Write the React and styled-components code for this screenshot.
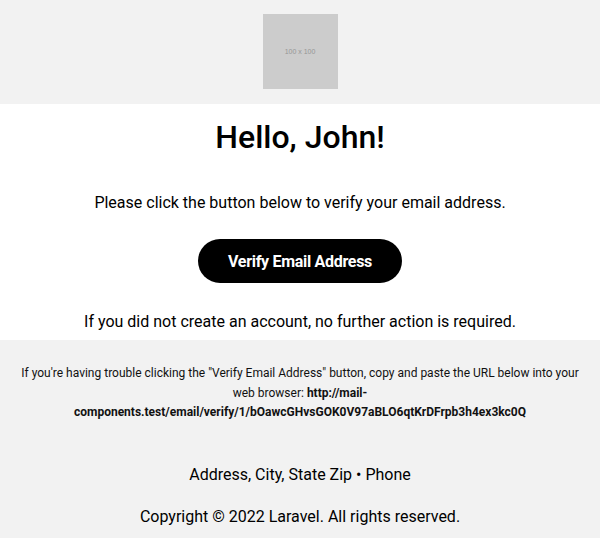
import styled, { createGlobalStyle } from "styled-components";

const GlobalStyle = createGlobalStyle`
  html, body {
    margin: 0;
    padding: 0;
    background: #ffffff;
  }
  body {
    font-family: Roboto, "Liberation Sans", sans-serif;
    color: #000000;
  }
`;

const Page = styled.div`
  width: 600px;
  display: flex;
  flex-direction: column;
`;

const Header = styled.div`
  background: #f2f2f2;
  height: 104px;
  display: flex;
  justify-content: center;
  padding-top: 14px;
  box-sizing: border-box;
`;

const Placeholder = styled.div`
  width: 75px;
  height: 75px;
  background: #cccccc;
  color: #969696;
  font-family: "Liberation Sans", Arial, sans-serif;
  font-size: 7px;
  display: flex;
  align-items: center;
  justify-content: center;
`;

const Body = styled.div`
  background: #ffffff;
  display: flex;
  flex-direction: column;
  align-items: center;
  padding: 11px 0 6px;
`;

const Heading = styled.h1`
  margin: 0;
  font-size: 32px;
  font-weight: 500;
  line-height: 44px;
`;

const Text = styled.p`
  margin: ${(p) => p.$margin || "0"};
  font-size: 16px;
  line-height: 24px;
  text-align: center;
`;

const Button = styled.a`
  display: flex;
  align-items: center;
  justify-content: center;
  width: 204px;
  height: 44px;
  border-radius: 22px;
  background: #000000;
  color: #ffffff;
  font-weight: 700;
  font-size: 16px;
  text-decoration: none;
  letter-spacing: -0.3px;
  margin: 24px 0 27px;
`;

const Footer = styled.div`
  background: #f2f2f2;
  padding: 24px 20px 10px;
  display: flex;
  flex-direction: column;
  align-items: center;
  flex: 1;
  min-height: 199px;
  box-sizing: border-box;
`;

const Trouble = styled.p`
  margin: 0;
  font-size: 12px;
  line-height: 19.5px;
  text-align: center;
  color: #111111;
  strong {
    font-weight: 700;
  }
`;

export default function App() {
  return (
    <Page>
      <GlobalStyle />
      <Header>
        <Placeholder>100 x 100</Placeholder>
      </Header>
      <Body>
        <Heading>Hello, John!</Heading>
        <Text $margin="32px 0 0">
          Please click the button below to verify your email address.
        </Text>
        <Button href="#">Verify Email Address</Button>
        <Text>If you did not create an account, no further action is required.</Text>
      </Body>
      <Footer>
        <Trouble>
          If you're having trouble clicking the "Verify Email Address" button, copy and paste the URL below into your
          web browser:{" "}
          <strong>
            http://mail-components.test/email/verify/1/bOawcGHvsGOK0V97aBLO6qtKrDFrpb3h4ex3kc0Q
          </strong>
        </Trouble>
        <Text $margin="40px 0 0">Address, City, State Zip • Phone</Text>
        <Text $margin="18px 0 0">Copyright © 2022 Laravel. All rights reserved.</Text>
      </Footer>
    </Page>
  );
}
